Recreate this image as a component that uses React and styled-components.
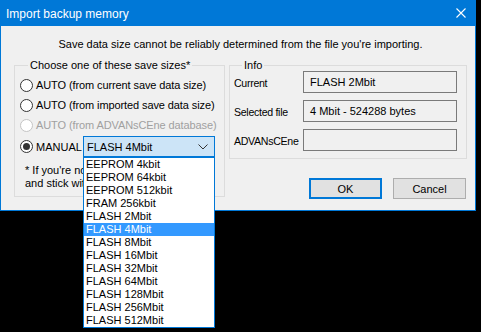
import React from 'react';
import styled, { createGlobalStyle } from 'styled-components';

const sizes = [
    'EEPROM 4kbit',
    'EEPROM 64kbit',
    'EEPROM 512kbit',
    'FRAM 256kbit',
    'FLASH 2Mbit',
    'FLASH 4Mbit',
    'FLASH 8Mbit',
    'FLASH 16Mbit',
    'FLASH 32Mbit',
    'FLASH 64Mbit',
    'FLASH 128Mbit',
    'FLASH 256Mbit',
    'FLASH 512Mbit',
];

const GlobalStyle = createGlobalStyle`
    html, body {
        margin: 0;
        padding: 0;
        background: #000000;
    }
    body {
        width: 481px;
        height: 332px;
        overflow: hidden;
        font-family: "Liberation Sans", Arial, sans-serif;
        font-size: 11px;
        color: #000000;
    }
    * {
        box-sizing: border-box;
    }
`

const Radio = ({ checked, disabled }) => (
    <RadioDot disabled={disabled}>
        {checked ? <RadioFill /> : null}
    </RadioDot>
)

export default function App() {
    return (
        <>
            <GlobalStyle />
            <Window>
                <TitleBar>
                    <Title>Import backup memory</Title>
                    <CloseButton>
                        <svg width="10" height="10" viewBox="0 0 10 10">
                            <path d="M0.5 0.5 L9.5 9.5 M9.5 0.5 L0.5 9.5" stroke="#ffffff" strokeWidth="1.1" fill="none" />
                        </svg>
                    </CloseButton>
                </TitleBar>
                <Client>
                    <Message>Save data size cannot be reliably determined from the file you're importing.</Message>
                    <Columns>
                        <SizeGroup>
                            <Legend>Choose one of these save sizes*</Legend>
                            <RadioList>
                                <RadioRow><Radio />AUTO (from current save data size)</RadioRow>
                                <RadioRow><Radio />AUTO (from imported save data size)</RadioRow>
                                <RadioRow disabled><Radio disabled />AUTO (from ADVANsCEne database)</RadioRow>
                                <ManualRow>
                                    <ManualLabel><Radio checked />MANUAL</ManualLabel>
                                    <Combo>
                                        <ComboValue>FLASH 4Mbit</ComboValue>
                                        <svg width="10" height="6" viewBox="0 0 10 6">
                                            <path d="M0.5 0.5 L5 5 L9.5 0.5" stroke="#333333" strokeWidth="1" fill="none" />
                                        </svg>
                                        <DropList>
                                            {sizes.map((s) => (
                                                <DropItem key={s} selected={s === 'FLASH 4Mbit'}>{s}</DropItem>
                                            ))}
                                        </DropList>
                                    </Combo>
                                </ManualRow>
                            </RadioList>
                            <Note>
                                <NoteLine>* If you're not sure what to pick,</NoteLine>
                                <NoteLine>and stick with the AUTO options.</NoteLine>
                            </Note>
                        </SizeGroup>
                        <RightColumn>
                            <InfoGroup>
                                <Legend>Info</Legend>
                                <InfoGrid>
                                    <InfoLabel>Current</InfoLabel>
                                    <Field>FLASH 2Mbit</Field>
                                    <InfoLabel>Selected file</InfoLabel>
                                    <Field>4 Mbit - 524288 bytes</Field>
                                    <InfoLabel>ADVANsCEne</InfoLabel>
                                    <Field></Field>
                                </InfoGrid>
                            </InfoGroup>
                            <Buttons>
                                <Button primary>OK</Button>
                                <Button>Cancel</Button>
                            </Buttons>
                        </RightColumn>
                    </Columns>
                </Client>
            </Window>
        </>
    )
}

const Window = styled.div`
    width: 476px;
    height: 211px;
    border: 1px solid #0078d7;
    border-top: none;
    background: #f0f0f0;
    display: flex;
    flex-direction: column;
`

const TitleBar = styled.div`
    height: 26px;
    margin: 0 -1px;
    background: #0078d7;
    display: flex;
    align-items: center;
    justify-content: space-between;
    padding: 0 10px 0 6px;
`

const Title = styled.div`
    color: #ffffff;
    font-size: 12px;
    padding-top: 1px;
`

const CloseButton = styled.div`
    display: flex;
    align-items: center;
`

const Client = styled.div`
    flex: 1;
    padding: 0 8px 0 13px;
    display: flex;
    flex-direction: column;
`

const Message = styled.div`
    text-align: center;
    line-height: 16px;
    padding: 10px 0 7px;
`

const Columns = styled.div`
    display: flex;
    gap: 4px;
    align-items: flex-start;
`

const Group = styled.fieldset`
    margin: 0;
    padding: 0;
    border: 1px solid #dcdcdc;
    min-width: 0;
`

const Legend = styled.legend`
    margin-left: 8px;
    padding: 0 2px;
    line-height: 13px;
    white-space: nowrap;
`

const SizeGroup = styled(Group)`
    width: 211px;
    height: 138px;
    padding: 0 5px 0 5px;
`

const RadioList = styled.div`
    display: flex;
    flex-direction: column;
    padding-top: 3px;
`

const RadioRow = styled.div`
    display: flex;
    align-items: center;
    gap: 3px;
    height: 20px;
    white-space: nowrap;
    letter-spacing: -0.1px;
    color: ${props => props.disabled ? '#a0a0a0' : '#000000'};
`

const RadioDot = styled.span`
    width: 13px;
    height: 13px;
    border-radius: 50%;
    border: 1px solid ${props => props.disabled ? '#c4c4c4' : '#333333'};
    background: #ffffff;
    display: flex;
    align-items: center;
    justify-content: center;
    flex: none;
`

const RadioFill = styled.span`
    width: 7px;
    height: 7px;
    border-radius: 50%;
    background: #333333;
`

const ManualRow = styled.div`
    display: flex;
    align-items: center;
    height: 21px;
    margin-top: 1px;
`

const ManualLabel = styled.div`
    display: flex;
    align-items: center;
    gap: 3px;
    width: 63px;
`

const Combo = styled.div`
    position: relative;
    width: 132px;
    height: 21px;
    border: 1px solid #0078d7;
    background: #cce4f7;
    display: flex;
    align-items: center;
    justify-content: space-between;
    padding: 0 6px 0 3px;
`

const ComboValue = styled.span`
    padding-top: 1px;
`

const DropList = styled.div`
    position: absolute;
    left: -1px;
    top: 20px;
    width: 132px;
    border: 1px solid #0078d7;
    background: #ffffff;
    z-index: 10;
`

const DropItem = styled.div`
    height: 13px;
    line-height: 13px;
    padding-left: 2px;
    background: ${props => props.selected ? '#3399ff' : '#ffffff'};
    color: ${props => props.selected ? '#ffffff' : '#000000'};
    white-space: nowrap;
`

const Note = styled.div`
    margin-top: 7px;
    padding-left: 5px;
    line-height: 13px;
`

const NoteLine = styled.div`
    white-space: nowrap;
`

const RightColumn = styled.div`
    width: 238px;
    display: flex;
    flex-direction: column;
`

const InfoGroup = styled(Group)`
    height: 100px;
    padding: 0 8px 5px 4px;
`

const InfoGrid = styled.div`
    display: grid;
    grid-template-columns: 69px 154px;
    grid-auto-rows: 22px;
    row-gap: 7px;
    align-items: center;
    margin-top: -1px;
`

const InfoLabel = styled.div`
    padding-top: 1px;
    white-space: nowrap;
    font-size: 10.6px;
    letter-spacing: -0.3px;
`

const Field = styled.div`
    height: 22px;
    border: 1px solid #7a7a7a;
    background: #f0f0f0;
    padding: 3px 0 0 6px;
    line-height: 14px;
`

const Buttons = styled.div`
    display: flex;
    justify-content: flex-end;
    gap: 11px;
    margin-top: 19px;
    padding-right: 1px;
`

const Button = styled.div`
    width: 73px;
    height: 21px;
    display: flex;
    align-items: center;
    justify-content: center;
    background: #e1e1e1;
    border: ${props => props.primary ? '2px solid #0078d7' : '1px solid #adadad'};
`
